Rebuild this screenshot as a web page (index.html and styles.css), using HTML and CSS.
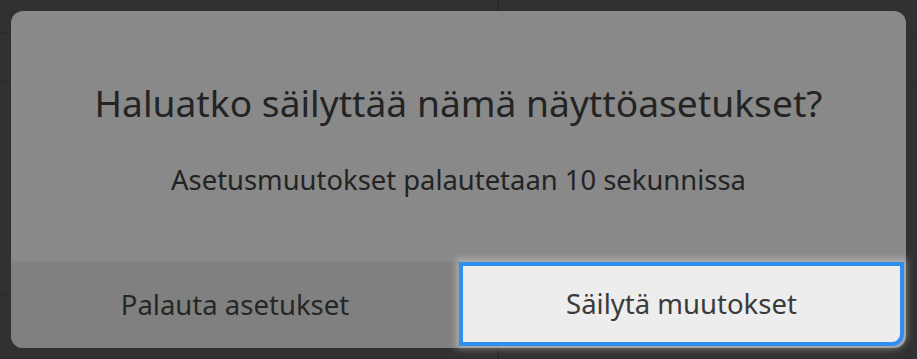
FILE: index.html
```html
<!DOCTYPE html>
<html lang="fi">
<head>
<meta charset="utf-8">
<title>Näyttöasetukset</title>
<link rel="stylesheet" href="styles.css">
</head>
<body>
<div class="backdrop">
  <div class="dialog" role="dialog">
    <div class="dialog-body">
      <h1 class="dialog-title">Haluatko säilyttää nämä näyttöasetukset?</h1>
      <p class="dialog-text">Asetusmuutokset palautetaan 10 sekunnissa</p>
    </div>
    <div class="dialog-actions">
      <button class="btn btn-revert">Palauta asetukset</button>
      <button class="btn btn-keep">Säilytä muutokset</button>
    </div>
  </div>
</div>
</body>
</html>
```
FILE: styles.css
```css
html, body {
  margin: 0;
  padding: 0;
}

body {
  width: 917px;
  height: 359px;
  overflow: hidden;
  background-color: #313131;
  background-image:
    linear-gradient(to right, transparent 497px, #292929 497px, #292929 499px, transparent 499px),
    linear-gradient(to bottom, transparent 32px, #2b2b2b 32px, #2b2b2b 33px, transparent 33px),
    linear-gradient(to bottom, transparent 81px, #2b2b2b 81px, #2b2b2b 82px, transparent 82px),
    linear-gradient(to bottom, transparent 294px, #2b2b2b 294px, #2b2b2b 295px, transparent 295px);
  font-family: "Noto Sans", "DejaVu Sans", sans-serif;
}

.backdrop {
  padding: 11px;
  display: flex;
}

.dialog {
  width: 895px;
  height: 337px;
  background: #898989;
  border-radius: 12px;
  display: flex;
  flex-direction: column;
  overflow: visible;
}

.dialog-body {
  height: 250px;
  box-sizing: border-box;
  padding-top: 73px;
  display: flex;
  flex-direction: column;
  align-items: center;
}

.dialog-title {
  margin: 0;
  font-size: 37.2px;
  line-height: 1;
  font-weight: 400;
  color: #232323;
  white-space: nowrap;
}

.dialog-text {
  margin: 44.5px 0 0;
  font-size: 27.4px;
  line-height: 1;
  color: #232323;
  white-space: nowrap;
}

.dialog-actions {
  flex: 1;
  display: flex;
}

.btn {
  font-family: inherit;
  font-size: 27.5px;
  line-height: 1;
  margin: 0;
  padding: 0;
  border: none;
  white-space: nowrap;
  display: flex;
  align-items: center;
  justify-content: center;
}

.btn-revert {
  width: 448px;
  background: #808080;
  color: #262626;
  border-bottom-left-radius: 12px;
}

.btn-keep {
  width: 445px;
  margin: 1px 2px 2px 0;
  box-sizing: border-box;
  background: #ededed;
  color: #3a3a3a;
  border: 4px solid #2f8ef2;
  border-bottom-right-radius: 12px;
  box-shadow: 0 0 7px 3px rgba(255, 255, 255, 0.35);
}
```
